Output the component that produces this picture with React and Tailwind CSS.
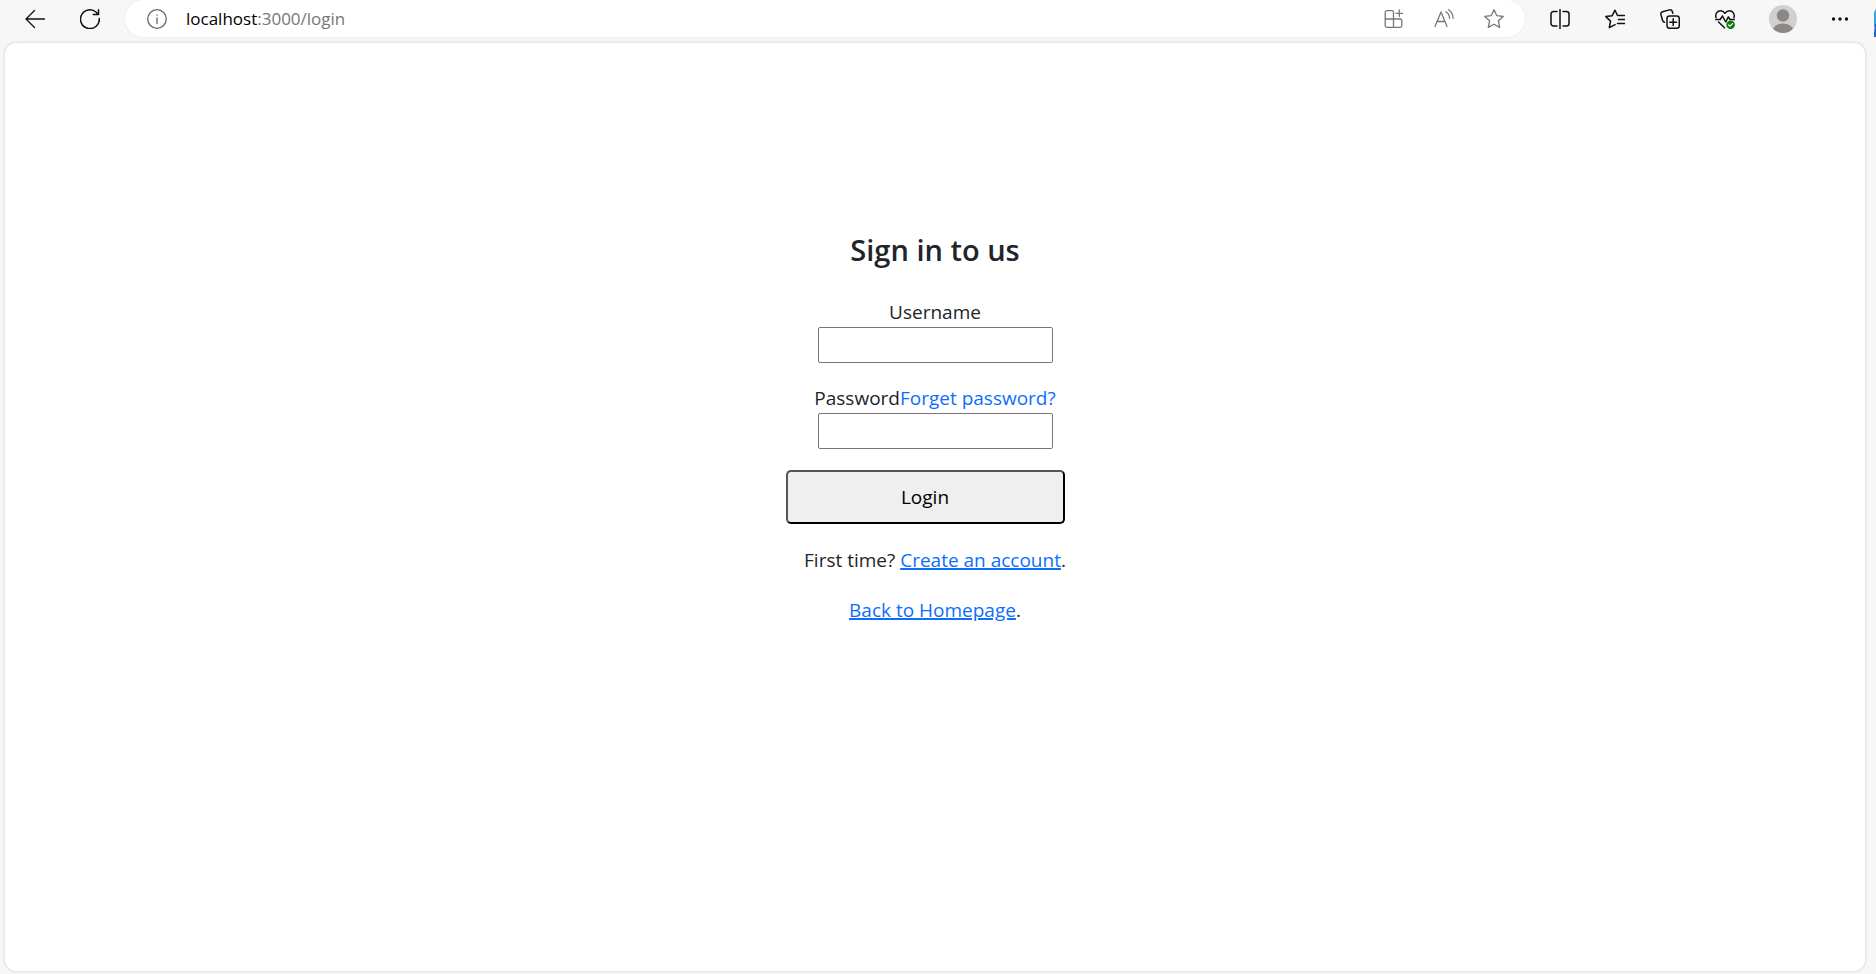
const stroke = {
  fill: 'none',
  stroke: 'currentColor',
  strokeWidth: 1.3,
  strokeLinecap: 'round',
  strokeLinejoin: 'round',
};

function Icon({ children, width = 1.3 }) {
  return (
    <svg className="size-5" viewBox="0 0 20 20" {...stroke} strokeWidth={width} aria-hidden="true">
      {children}
    </svg>
  );
}

function ToolButton({ label, children }) {
  return (
    <button type="button" aria-label={label} className="flex w-[55px] shrink-0 items-center justify-center text-[#111111]">
      {children}
    </button>
  );
}

function BarButton({ label, children }) {
  return (
    <button type="button" aria-label={label} className="flex w-[50px] shrink-0 items-center justify-center text-[#767676]">
      {children}
    </button>
  );
}

const STAR = 'M10 .8l2.7 5.8 6.5.8-4.8 4.4 1.3 6.6L10 15.2l-5.7 3.2 1.3-6.6L.8 7.4l6.5-.8z';

function Toolbar() {
  return (
    <header className="flex h-[37px] items-stretch pl-[7px]">
      <ToolButton label="Back">
        <Icon>
          <path d="M19.5 10H1M9.5 1.5L1 10l8.500 8.500" />
        </Icon>
      </ToolButton>
      <ToolButton label="Refresh">
        <Icon width={1.5}>
          <path d="M19.300 9.500A9.400 9.400 0 1 1 16.200 3.200L18.500 5.500M18.500 .8v4.800h-5.200" />
        </Icon>
      </ToolButton>
      <div className="ml-2 flex min-w-0 flex-1 items-stretch rounded-full bg-white pr-[6px] pl-[22px] shadow-[0_0_3px_rgba(0,0,0,0.08)]">
        <button type="button" aria-label="Site information" className="flex items-center text-[#666666]">
          <Icon>
            <circle cx="10" cy="10" r="9.300" />
            <path d="M10 9v5.500M10 6v.2" />
          </Icon>
        </button>
        <div className="ml-[19px] flex min-w-0 flex-1 items-center text-[17px] text-[#767676]">
          <span className="text-black">localhost</span>:3000/login
        </div>
        <BarButton label="Apps">
          <Icon>
            <path d="M9.500 10V3.200A1.500 1.500 0 0 0 8 1.700H2.700A1.500 1.500 0 0 0 1.200 3.200v13.600a1.500 1.500 0 0 0 1.500 1.500h13.600a1.500 1.500 0 0 0 1.500-1.500v-5.300a1.500 1.500 0 0 0-1.500-1.500H1.200M9.500 10v8.300M15.300 1v6.500M12 4.300h6.600" />
          </Icon>
        </BarButton>
        <BarButton label="Read aloud">
          <Icon>
            <path d="M1 17.500L7 3l6 14.500M3.200 12.500h7.600M11.800 2.800c2.300 1.300 3.600 3.400 3.800 6.300M14.500 .8c2.900 1.900 4.400 4.700 4.600 8.500" />
          </Icon>
        </BarButton>
        <BarButton label="Add to favorites">
          <Icon>
            <path d={STAR} />
          </Icon>
        </BarButton>
      </div>
      <div className="ml-[7px] flex shrink-0">
        <ToolButton label="Split screen">
          <Icon width={1.500}>
            <path d="M7 2.500H3.500A2.500 2.500 0 0 0 1 5v9.500A2.500 2.500 0 0 0 3.500 17H7M13 2.500h3.500A2.500 2.500 0 0 1 19 5v9.500a2.500 2.500 0 0 1-2.500 2.500H13M10 .6v18.800" />
          </Icon>
        </ToolButton>
        <ToolButton label="Favorites">
          <Icon width={1.500}>
            <path d="M12.500 6.500L10 1.200 7.200 6.700.8 7.600l4.700 4.500-1.200 6.500 5.800-2.900M12.500 6.500h7M13.500 10.500h6M12.500 14.500h7" />
          </Icon>
        </ToolButton>
        <ToolButton label="Collections">
          <Icon width={1.500}>
            <rect x="7" y="7" width="12.300" height="12.300" rx="2.500" />
            <path d="M13.200 9.800v6.800M9.800 13.200h6.800M4.500 13.300C3.300 13 2.800 12.200 2.500 11.200L.9 5.500C.6 4.200 1.200 3.200 2.500 2.800L9.500.9c1.300-.3 2.400.3 2.800 1.500l.5 1.800" />
          </Icon>
        </ToolButton>
        <ToolButton label="Browser essentials">
          <Icon width={1.500}>
            <path d="M1 8.500C0 4.500 2.500 1.700 5.500 1.700c2 0 3.300 1 4.500 2.500 1.200-1.500 2.500-2.500 4.500-2.500 3 0 5.500 2.800 4.500 6.800M.8 10.500h4.400L7.500 7l3.200 6 2.600-5.200 1.700 2.700h4.500M3.500 13l6 5.700" />
            <circle cx="15.600" cy="15.800" r="4.300" fill="#107c10" stroke="none" />
            <path d="M13.700 16l1.300 1.200 2.500-2.500" stroke="white" strokeWidth="1.200" />
          </Icon>
        </ToolButton>
        <button type="button" aria-label="Profile" className="flex w-[62px] items-center justify-center">
          <svg className="size-7 overflow-hidden rounded-full" viewBox="0 0 28 28" aria-hidden="true">
            <rect width="28" height="28" fill="#d2d0ce" />
            <circle cx="14" cy="10.500" r="6.200" fill="#8a8886" />
            <ellipse cx="14" cy="26" rx="10.500" ry="7.500" fill="#8a8886" />
          </svg>
        </button>
        <button type="button" aria-label="Settings and more" className="flex w-[52px] items-center justify-center text-[#111111]">
          <svg className="h-5 w-[18px]" viewBox="0 0 18 20" fill="currentColor" aria-hidden="true">
            <circle cx="2.500" cy="10" r="1.700" />
            <circle cx="9" cy="10" r="1.700" />
            <circle cx="15.500" cy="10" r="1.700" />
          </svg>
        </button>
        <div className="ml-2 flex w-[2px] items-end overflow-hidden">
          <svg className="h-7 w-[2px]" viewBox="0 0 2 28" aria-hidden="true">
            <path d="M2 0Q0 2 0 6v12h2z" fill="#2aa7e8" />
            <path d="M1 15h1v13H0v-4z" fill="#1f5fd0" />
          </svg>
        </div>
      </div>
    </header>
  );
}

function LoginForm() {
  const field = 'h-9 w-[235px] rounded-[2px] border border-[#767676] bg-white px-1 outline-none';
  return (
    <main className="flex flex-col items-center pt-[189px] text-[19px] leading-[30px] text-[#212529]">
      <h1 className="text-[29px] leading-9 font-semibold">Sign in to us</h1>
      <form className="mt-[29px] flex flex-col items-center" onSubmit={(e) => e.preventDefault()}>
        <label htmlFor="username">Username</label>
        <input id="username" type="text" className={field} />
        <div className="mt-5 flex">
          <label htmlFor="password">Password</label>
          <a href="#forget" className="text-[#0d6efd]">Forget password?</a>
        </div>
        <input id="password" type="password" className={field} />
        <button
          type="submit"
          className="mt-[21px] mr-5 h-[54px] w-[279px] rounded-[5px] border-2 border-t-[#555555] border-r-black border-b-black border-l-[#555555] bg-[#efefef] text-black"
        >
          Login
        </button>
      </form>
      <p className="mt-[21px]">
        First time? <a href="#register" className="text-[#0d6efd] underline decoration-2">Create an account</a>.
      </p>
      <p className="mt-5">
        <a href="#home" className="text-[#0d6efd] underline decoration-2">Back to Homepage</a>.
      </p>
    </main>
  );
}

export default function App() {
  return (
    <div className="flex min-h-screen flex-col bg-[#f7f7f7] font-['Open_Sans','Noto_Sans',sans-serif]">
      <Toolbar />
      <div className="mt-[6px] mr-[11px] mb-[3px] ml-[5px] flex-1 rounded-[11px] bg-white shadow-[0_0_3px_rgba(0,0,0,0.22)]">
        <LoginForm />
      </div>
    </div>
  );
}
